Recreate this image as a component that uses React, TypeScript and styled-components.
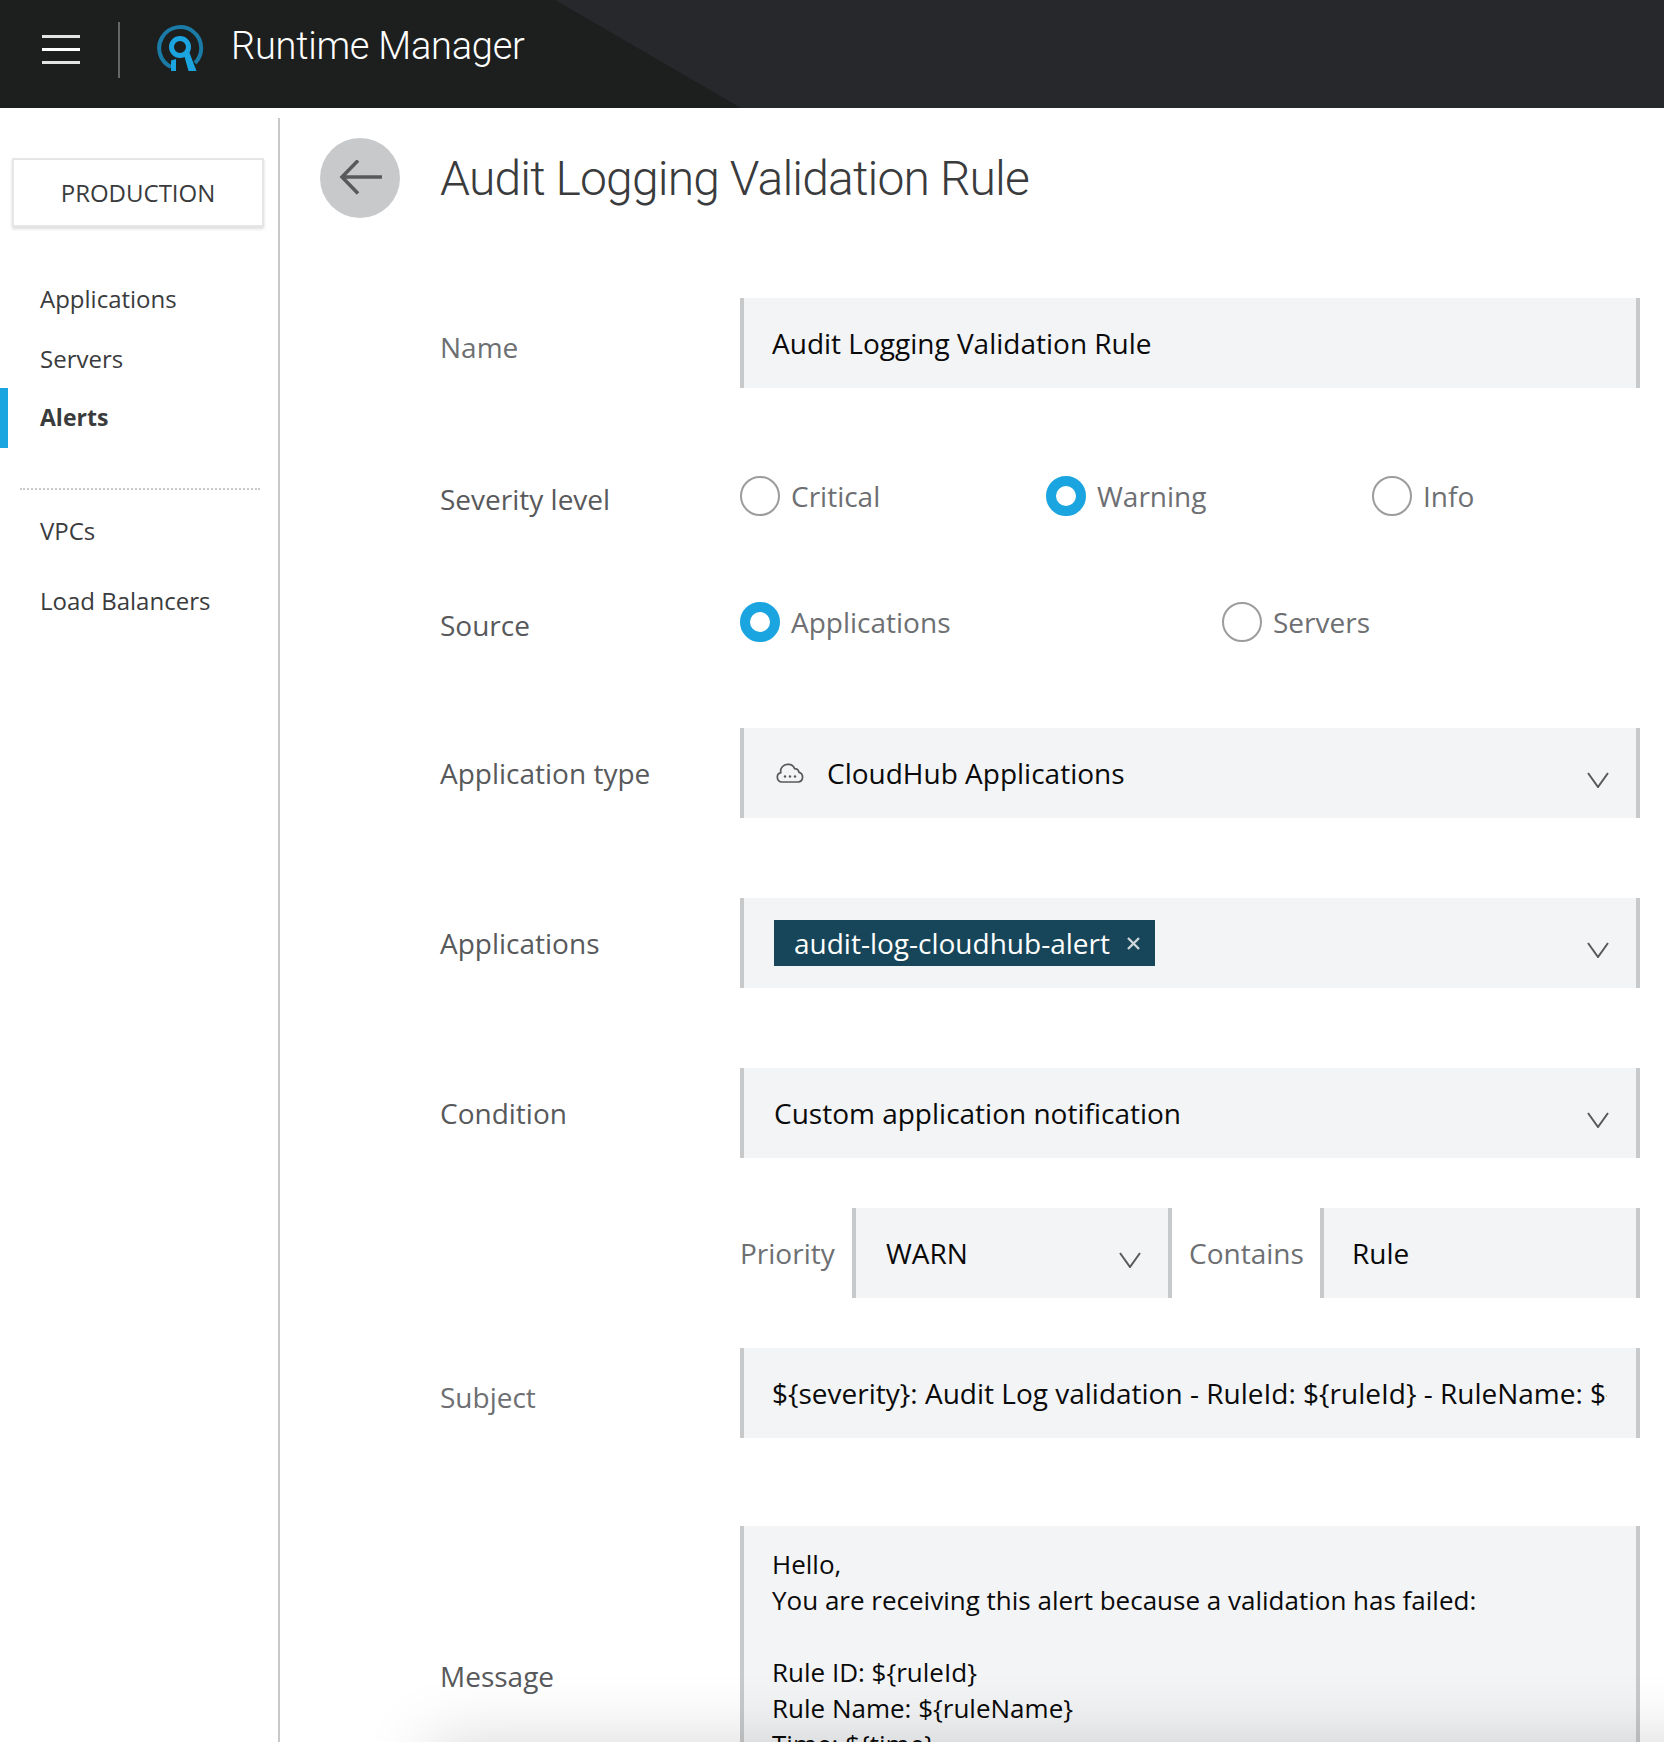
import styled, { createGlobalStyle } from 'styled-components';

const GlobalStyle = createGlobalStyle`
  html, body {
    margin: 0;
    padding: 0;
    background: #fff;
  }
  body {
    font-family: "Open Sans", "Liberation Sans", sans-serif;
  }
`;

const Page = styled.div`
  position: relative;
  width: 1664px;
  height: 1742px;
  overflow: hidden;
  background: #fff;
`;

const Header = styled.header`
  position: relative;
  display: flex;
  align-items: center;
  height: 108px;
  padding-bottom: 16px;
  box-sizing: border-box;
  background: #1d1e1e;

  &::before {
    content: '';
    position: absolute;
    inset: 0;
    background: #27282b;
    clip-path: polygon(555px 0, 100% 0, 100% 100%, 741px 100%);
  }
`;

const MenuButton = styled.div`
  display: flex;
  flex-direction: column;
  gap: 10px;
  width: 38px;
  margin: 6px 0 0 42px;
`;

const MenuLine = styled.span<{ $bright?: boolean }>`
  display: block;
  height: 3px;
  background: ${(p) => (p.$bright ? '#fff' : '#e4e4e4')};
`;

const HeaderDivider = styled.div`
  width: 2px;
  height: 56px;
  margin: 8px 0 0 38px;
  background: #666;
`;

const LogoMark = styled.svg`
  width: 48px;
  height: 50px;
  margin: 6px 0 0 36px;
  flex-shrink: 0;
`;

const AppName = styled.div`
  margin-left: 27px;
  font-family: Roboto, "Liberation Sans", sans-serif;
  font-weight: 300;
  font-size: 38px;
  letter-spacing: -0.25px;
  color: #fff;
  white-space: nowrap;
`;

const Body = styled.div`
  display: flex;
  height: 1634px;
`;

const Sidebar = styled.aside`
  width: 278px;
  flex-shrink: 0;
  padding-top: 50px;
  box-sizing: border-box;
`;

const EnvBox = styled.div`
  display: flex;
  align-items: center;
  justify-content: center;
  width: 252px;
  height: 69px;
  margin-left: 12px;
  box-sizing: border-box;
  border: 2px solid #e6e6e7;
  box-shadow: 0 2px 3px rgba(0, 0, 0, 0.14);
  font-size: 24px;
  color: #3a3b3d;
`;

const NavList = styled.nav`
  display: flex;
  flex-direction: column;
  margin-top: 42px;
`;

const NavItem = styled.div<{ $active?: boolean; $height?: number; $lift?: number }>`
  display: flex;
  align-items: center;
  height: ${(p) => p.$height ?? 59}px;
  box-sizing: border-box;
  padding: 0 0 ${(p) => p.$lift ?? 0}px ${(p) => (p.$active ? 32 : 40)}px;
  border-left: ${(p) => (p.$active ? '8px solid #1ba5e0' : 'none')};
  font-size: ${(p) => (p.$active ? 23 : 24)}px;
  font-weight: ${(p) => (p.$active ? 700 : 400)};
  color: #3a3b3d;
`;

const NavDivider = styled.div`
  width: 240px;
  margin: 40px 0 11px 20px;
  border-top: 2px dotted #c9c9c9;
`;

const Main = styled.main`
  flex: 1;
  margin-top: 10px;
  padding: 20px 24px 0 40px;
  border-left: 2px solid #c8c8c9;
`;

const TitleRow = styled.div`
  display: flex;
  align-items: center;
  gap: 40px;
  height: 80px;
`;

const BackButton = styled.div`
  display: flex;
  align-items: center;
  justify-content: center;
  width: 80px;
  height: 80px;
  border-radius: 50%;
  background: #c8c9cb;
`;

const Title = styled.h1`
  margin: 0;
  font-family: Roboto, "Liberation Sans", sans-serif;
  font-weight: 300;
  font-size: 48px;
  letter-spacing: -0.85px;
  color: #3a3b3d;
  white-space: nowrap;
`;

const Form = styled.div`
  margin-left: 120px;
`;

const Row = styled.div<{ $top: number; $height?: number }>`
  display: grid;
  grid-template-columns: 300px 900px;
  grid-auto-rows: ${(p) => p.$height ?? 90}px;
  align-items: center;
  margin-top: ${(p) => p.$top}px;
`;

const Label = styled.label<{ $dark?: boolean; $nudge?: number }>`
  padding-top: ${(p) => p.$nudge ?? 0}px;
  font-size: 28px;
  color: ${(p) => (p.$dark ? '#58595b' : '#6d6f72')};
`;

const Field = styled.div<{ $input?: boolean }>`
  display: flex;
  align-items: center;
  min-width: 0;
  height: 90px;
  box-sizing: border-box;
  padding: 0 ${(p) => (p.$input ? '29px 0 28px' : '27px 0 30px')};
  border-left: 4px solid #c8c9cb;
  border-right: 4px solid #c8c9cb;
  background: #f3f4f6;
  font-size: 28px;
  color: #0a0a0a;
`;

const ValueText = styled.div`
  flex: 1;
  min-width: 0;
  overflow: hidden;
  white-space: nowrap;
`;

const Chevron = styled.svg`
  width: 22px;
  height: 16px;
  margin-top: 14px;
  flex-shrink: 0;
`;

const CloudIcon = styled.svg`
  width: 28px;
  height: 20px;
  margin: 0 23px 0 2px;
  flex-shrink: 0;
`;

const Tag = styled.span`
  display: inline-flex;
  align-items: center;
  height: 46px;
  padding: 0 14px 0 20px;
  background: #17465a;
  color: #fff;
  white-space: nowrap;
`;

const TagClose = styled.svg`
  width: 15px;
  height: 13px;
  margin-left: 16px;
`;

const RadioGroup = styled.div`
  display: flex;
  align-items: center;
  height: 40px;
`;

const RadioOption = styled.div<{ $width: number }>`
  display: flex;
  align-items: center;
  gap: 11px;
  width: ${(p) => p.$width}px;
  font-size: 28px;
  color: #6d6f72;
`;

const RadioDot = styled.span<{ $checked?: boolean }>`
  display: block;
  width: 40px;
  height: 40px;
  box-sizing: border-box;
  border-radius: 50%;
  border: ${(p) => (p.$checked ? '10px solid #1ba5e0' : '2px solid #9c9c9c')};
  background: #fff;
`;

const FilterRow = styled.div`
  display: flex;
  align-items: center;
  margin: 50px 0 0 300px;
  width: 900px;
`;

const FilterLabel = styled.span<{ $width: number; $inset?: number }>`
  width: ${(p) => p.$width}px;
  flex-shrink: 0;
  box-sizing: border-box;
  padding-left: ${(p) => p.$inset ?? 0}px;
  font-size: 28px;
  color: #6d6f72;
  white-space: nowrap;
`;

const FilterField = styled(Field)<{ $width: number }>`
  width: ${(p) => p.$width}px;
  flex-shrink: 0;
`;

const MessageBox = styled.div`
  height: 300px;
  box-sizing: border-box;
  padding: 20px 28px 0;
  border-left: 4px solid #c8c9cb;
  border-right: 4px solid #c8c9cb;
  background: #f3f4f6;
  font-size: 26px;
  line-height: 36px;
  color: #0a0a0a;
  white-space: pre-wrap;
`;

const WindowShadow = styled.div`
  position: absolute;
  left: 440px;
  right: -200px;
  top: 1752px;
  height: 60px;
  background: #000;
  box-shadow: 0 0 70px 10px rgba(0, 0, 0, 0.16);
  pointer-events: none;
`;

const ChevronDown = () => (
  <Chevron viewBox="0 0 22 16" fill="none" stroke="#58595b" strokeWidth="2">
    <path d="M1 1l10 14L21 1" />
  </Chevron>
);

const Radio = ({ label, checked, width }: { label: string; checked?: boolean; width: number }) => (
  <RadioOption $width={width}>
    <RadioDot $checked={checked} />
    {label}
  </RadioOption>
);

const message = `Hello,
You are receiving this alert because a validation has failed:

Rule ID: \${ruleId}
Rule Name: \${ruleName}
Time: \${time}`;

export default function App() {
  return (
    <Page>
      <GlobalStyle />
      <Header>
        <MenuButton>
          <MenuLine />
          <MenuLine $bright />
          <MenuLine />
        </MenuButton>
        <HeaderDivider />
        <LogoMark viewBox="0 0 48 50" fill="none">
          <path d="M15 43A21 21 0 1 1 39 39" stroke="#1a7ba6" strokeWidth="4" />
          <circle cx="24" cy="23" r="8.5" stroke="#1ba5e0" strokeWidth="5" />
          <path d="M28 31l5-3.5L40.5 47h-8z" fill="#1ba5e0" />
          <path d="M15 36.5l5-1.5v12h-5z" fill="#1ba5e0" />
        </LogoMark>
        <AppName>Runtime Manager</AppName>
      </Header>
      <Body>
        <Sidebar>
          <EnvBox>PRODUCTION</EnvBox>
          <NavList>
            <NavItem $height={60} $lift={2}>Applications</NavItem>
            <NavItem>Servers</NavItem>
            <NavItem $active $height={60} $lift={3}>Alerts</NavItem>
            <NavDivider />
            <NavItem>VPCs</NavItem>
            <NavItem $height={81}>Load Balancers</NavItem>
          </NavList>
        </Sidebar>
        <Main>
          <TitleRow>
            <BackButton>
              <svg width="44" height="36" viewBox="-1 1 44 36" fill="none" stroke="#58595b" strokeWidth="3.5">
                <path d="M43 18H3M19 1.5L3 18l16 16.5" />
              </svg>
            </BackButton>
            <Title>Audit Logging Validation Rule</Title>
          </TitleRow>
          <Form>
            <Row $top={80}>
              <Label $nudge={8}>Name</Label>
              <Field $input>
                <ValueText>Audit Logging Validation Rule</ValueText>
              </Field>
            </Row>
            <Row $top={88} $height={40}>
              <Label $dark $nudge={6}>Severity level</Label>
              <RadioGroup>
                <Radio label="Critical" width={306} />
                <Radio label="Warning" checked width={326} />
                <Radio label="Info" width={200} />
              </RadioGroup>
            </Row>
            <Row $top={86} $height={40}>
              <Label $dark $nudge={6}>Source</Label>
              <RadioGroup>
                <Radio label="Applications" checked width={482} />
                <Radio label="Servers" width={300} />
              </RadioGroup>
            </Row>
            <Row $top={86}>
              <Label $dark>Application type</Label>
              <Field>
                <CloudIcon viewBox="0 0 28 20" fill="none" stroke="#58595b" strokeWidth="1.7">
                  <path d="M6 19a4.8 4.8 0 0 1-1.2-9.4A6.8 6.8 0 0 1 12 1.4a6.6 6.6 0 0 1 6.6 4.2 4.6 4.6 0 0 1 4.4 3.8A4.9 4.9 0 0 1 22 19z" />
                  <circle cx="9" cy="13.5" r="1.2" fill="#58595b" stroke="none" />
                  <circle cx="14" cy="13.5" r="1.2" fill="#58595b" stroke="none" />
                  <circle cx="19" cy="13.5" r="1.2" fill="#58595b" stroke="none" />
                </CloudIcon>
                <ValueText>CloudHub Applications</ValueText>
                <ChevronDown />
              </Field>
            </Row>
            <Row $top={80}>
              <Label $dark>Applications</Label>
              <Field>
                <ValueText>
                  <Tag>
                    audit-log-cloudhub-alert
                    <TagClose viewBox="0 0 15 13" stroke="#cfd6da" strokeWidth="2.4">
                      <path d="M2 1l11 11M13 1L2 12" />
                    </TagClose>
                  </Tag>
                </ValueText>
                <ChevronDown />
              </Field>
            </Row>
            <Row $top={80}>
              <Label $dark>Condition</Label>
              <Field>
                <ValueText>Custom application notification</ValueText>
                <ChevronDown />
              </Field>
            </Row>
            <FilterRow>
              <FilterLabel $width={112}>Priority</FilterLabel>
              <FilterField $width={320}>
                <ValueText>WARN</ValueText>
                <ChevronDown />
              </FilterField>
              <FilterLabel $width={148} $inset={17}>Contains</FilterLabel>
              <FilterField $input $width={320}>
                <ValueText>Rule</ValueText>
              </FilterField>
            </FilterRow>
            <Row $top={50}>
              <Label $nudge={8}>Subject</Label>
              <Field $input>
                <ValueText>{'${severity}: Audit Log validation - RuleId: ${ruleId} - RuleName: ${ruleName}'}</ValueText>
              </Field>
            </Row>
            <Row $top={88} $height={300}>
              <Label $dark>Message</Label>
              <MessageBox>{message}</MessageBox>
            </Row>
          </Form>
        </Main>
      </Body>
      <WindowShadow />
    </Page>
  );
}
